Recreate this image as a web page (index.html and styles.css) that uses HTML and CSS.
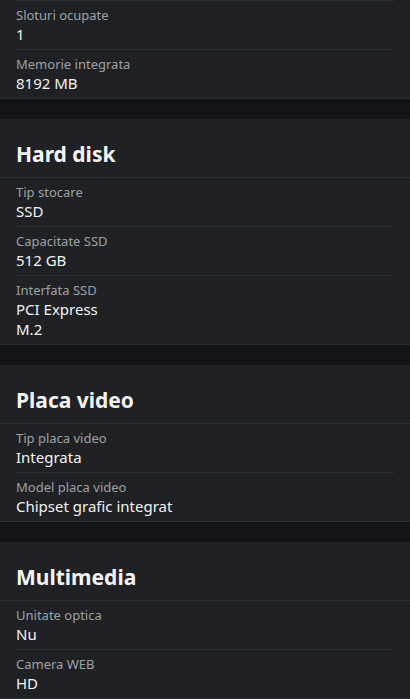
FILE: index.html
```html
<!DOCTYPE html>
<html lang="ro">
<head>
<meta charset="utf-8">
<link rel="stylesheet" href="styles.css">
</head>
<body>
<div class="page">
  <section class="card card-top">
    <div class="row"><div class="label">Sloturi ocupate</div><div class="value">1</div></div>
    <div class="row"><div class="label">Memorie integrata</div><div class="value">8192 MB</div></div>
  </section>
  <section class="card">
    <h2 class="title">Hard disk</h2>
    <div class="row"><div class="label">Tip stocare</div><div class="value">SSD</div></div>
    <div class="row"><div class="label">Capacitate SSD</div><div class="value">512 GB</div></div>
    <div class="row"><div class="label">Interfata SSD</div><div class="value">PCI Express<br>M.2</div></div>
  </section>
  <section class="card">
    <h2 class="title">Placa video</h2>
    <div class="row"><div class="label">Tip placa video</div><div class="value">Integrata</div></div>
    <div class="row"><div class="label">Model placa video</div><div class="value">Chipset grafic integrat</div></div>
  </section>
  <section class="card">
    <h2 class="title">Multimedia</h2>
    <div class="row"><div class="label">Unitate optica</div><div class="value">Nu</div></div>
    <div class="row"><div class="label">Camera WEB</div><div class="value">HD</div></div>
  </section>
</div>
</body>
</html>
```
FILE: styles.css
```css
html, body {
  margin: 0;
  padding: 0;
  background: #131417;
}
body {
  font-family: "Noto Sans", "Open Sans", sans-serif;
  width: 410px;
  overflow: hidden;
}
.page {
  display: flex;
  flex-direction: column;
  gap: 20px;
}
.card {
  background: #1f2124;
  border-bottom: 1px solid #2c2f33;
}
.card-top .row:first-child {
  border-top: 1px solid #2c2f33;
}
.title {
  margin: 0;
  padding: 22px 16px 10px;
  font-size: 21px;
  line-height: 26px;
  font-weight: 700;
  color: #f4f4f5;
  border-bottom: 1px solid #2c2f33;
}
.row {
  margin: 0 16px;
  padding: 5px 0 5px;
  border-bottom: 1px solid #2c2f33;
}
.row:last-child {
  border-bottom: none;
}
.label {
  font-size: 13px;
  line-height: 18px;
  color: #9da1a7;
}
.value {
  font-size: 15px;
  line-height: 20px;
  color: #f2f2f3;
  font-weight: 450;
}
```
